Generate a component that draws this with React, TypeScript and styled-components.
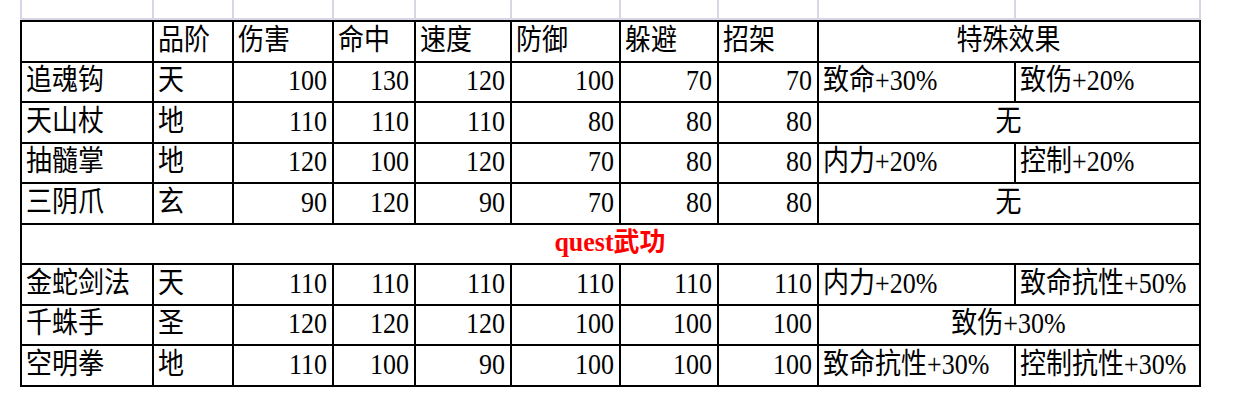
import React from "react";
import styled, {createGlobalStyle} from "styled-components";

//=============== GLOBAL ==================
const GlobalStyle = createGlobalStyle`
    html, body {
        margin: 0;
        padding: 0;
        background: #fff;
    }
    body {
        font-family: "Liberation Serif", "Noto Sans CJK SC", serif;
        color: #000;
    }
`;

//=============== STYLED ==================
const COLUMNS = "132px 80px 100px 82px 96px 109px 98px 100px 197px 185px";
const ROWS = "41px 40px 41px 40px 41px 40px 41px 40px 41px";

const Page = styled.div`
    padding-left: 20px;
`;

const GhostGrid = styled.div`
    display: grid;
    grid-template-columns: ${COLUMNS};
    height: 20px;
    width: fit-content;
    border-left: 2px solid #d6d6e6;
`;

const GhostCell = styled.div`
    box-sizing: border-box;
    border-right: 2px solid #d6d6e6;
    border-bottom: 2px solid #d6d6e6;
`;

const Sheet = styled.div`
    display: grid;
    grid-template-columns: ${COLUMNS};
    grid-template-rows: ${ROWS};
    width: fit-content;
    border-left: 2px solid #000;
    border-top: 2px solid #000;
`;

const Cell = styled.div<{ $align?: "left" | "right" | "center"; $span?: number }>`
    box-sizing: border-box;
    grid-column: ${p => (p.$span ? `span ${p.$span}` : "auto")};
    display: flex;
    align-items: center;
    justify-content: ${p =>
        p.$align === "right" ? "flex-end" : p.$align === "center" ? "center" : "flex-start"};
    padding: 0 5px 2px 4px;
    border-right: 2px solid #000;
    border-bottom: 2px solid #000;
    font-size: 26px;
    line-height: 1;
    white-space: nowrap;
    overflow: hidden;
`;

const Label = styled.span`
    display: inline-block;
    transform: scaleY(1.12);
`;

const SectionTitle = styled.span`
    display: inline-block;
    color: #ff0000;
    font-weight: bold;
    font-size: 26px;
    transform: scaleY(1.02);
`;

//=============== DATA ==================
type SkillType = {
    name: string
    grade: string
    stats: number[]
    effects: string[]
}

const HEADERS = ["品阶", "伤害", "命中", "速度", "防御", "躲避", "招架"];

const BASE_SKILLS: SkillType[] = [
    {name: "追魂钩", grade: "天", stats: [100, 130, 120, 100, 70, 70], effects: ["致命+30%", "致伤+20%"]},
    {name: "天山杖", grade: "地", stats: [110, 110, 110, 80, 80, 80], effects: ["无"]},
    {name: "抽髓掌", grade: "地", stats: [120, 100, 120, 70, 80, 80], effects: ["内力+20%", "控制+20%"]},
    {name: "三阴爪", grade: "玄", stats: [90, 120, 90, 70, 80, 80], effects: ["无"]},
];

const QUEST_SKILLS: SkillType[] = [
    {name: "金蛇剑法", grade: "天", stats: [110, 110, 110, 110, 110, 110], effects: ["内力+20%", "致命抗性+50%"]},
    {name: "千蛛手", grade: "圣", stats: [120, 120, 120, 100, 100, 100], effects: ["致伤+30%"]},
    {name: "空明拳", grade: "地", stats: [110, 100, 90, 100, 100, 100], effects: ["致命抗性+30%", "控制抗性+30%"]},
];

//============== COMPONENTS =====================
const SkillRow: React.FC<{ skill: SkillType }> = ({skill}) => (
    <>
        <Cell><Label>{skill.name}</Label></Cell>
        <Cell><Label>{skill.grade}</Label></Cell>
        {skill.stats.map((s, i) => (
            <Cell key={i} $align="right"><Label>{s}</Label></Cell>
        ))}
        {skill.effects.length === 1
            ? <Cell $span={2} $align="center"><Label>{skill.effects[0]}</Label></Cell>
            : skill.effects.map((e, i) => (
                <Cell key={"e" + i}><Label>{e}</Label></Cell>
            ))}
    </>
);

const App: React.FC = () => {
    return (
        <Page>
            <GlobalStyle/>
            <GhostGrid>
                {Array.from({length: 10}).map((_, i) => <GhostCell key={i}/>)}
            </GhostGrid>
            <Sheet>
                <Cell/>
                {HEADERS.map(h => (
                    <Cell key={h}><Label>{h}</Label></Cell>
                ))}
                <Cell $span={2} $align="center"><Label>特殊效果</Label></Cell>

                {BASE_SKILLS.map(s => <SkillRow key={s.name} skill={s}/>)}

                <Cell $span={10} $align="center"><SectionTitle>quest武功</SectionTitle></Cell>

                {QUEST_SKILLS.map(s => <SkillRow key={s.name} skill={s}/>)}
            </Sheet>
        </Page>
    );
};

export default App;
